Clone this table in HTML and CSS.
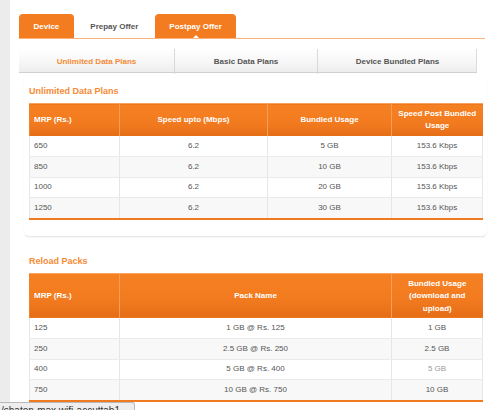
FILE: index.html
```html
<!DOCTYPE html>
<html>
<head>
<meta charset="utf-8">
<link rel="stylesheet" href="styles.css">
</head>
<body>
<div class="page">
  <div class="tabs">
    <div class="tab tab-on">Device</div>
    <div class="tab">Prepay Offer</div>
    <div class="tab tab-on tab-current">Postpay Offer</div>
  </div>
  <div class="subtabs">
    <div class="sub sub-active">Unlimited Data Plans</div>
    <div class="sub">Basic Data Plans</div>
    <div class="sub">Device Bundled Plans</div>
  </div>

  <div class="card">
    <h3 class="title">Unlimited Data Plans</h3>
    <table class="plans">
      <colgroup><col class="w-mrp"><col class="w-speed"><col class="w-usage"><col class="w-post"></colgroup>
      <thead>
        <tr><th class="left">MRP (Rs.)</th><th>Speed upto (Mbps)</th><th>Bundled Usage</th><th>Speed Post Bundled Usage</th></tr>
      </thead>
      <tbody>
        <tr><td class="left">650</td><td>6.2</td><td>5 GB</td><td>153.6 Kbps</td></tr>
        <tr><td class="left">850</td><td>6.2</td><td>10 GB</td><td>153.6 Kbps</td></tr>
        <tr><td class="left">1000</td><td>6.2</td><td>20 GB</td><td>153.6 Kbps</td></tr>
        <tr><td class="left">1250</td><td>6.2</td><td>30 GB</td><td>153.6 Kbps</td></tr>
      </tbody>
    </table>
  </div>

  <div class="card card-second">
    <h3 class="title">Reload Packs</h3>
    <table class="plans">
      <colgroup><col class="w-mrp"><col class="w-pack"><col class="w-post"></colgroup>
      <thead>
        <tr><th class="left">MRP (Rs.)</th><th>Pack Name</th><th>Bundled Usage (download and upload)</th></tr>
      </thead>
      <tbody>
        <tr><td class="left">125</td><td>1 GB @ Rs. 125</td><td>1 GB</td></tr>
        <tr><td class="left">250</td><td>2.5 GB @ Rs. 250</td><td>2.5 GB</td></tr>
        <tr><td class="left">400</td><td>5 GB @ Rs. 400</td><td class="faint">5 GB</td></tr>
        <tr><td class="left">750</td><td>10 GB @ Rs. 750</td><td>10 GB</td></tr>
      </tbody>
    </table>
  </div>
</div>
<div class="status">/shaton-max.wifi-accuttab1</div>
</body>
</html>
```

FILE: styles.css
```css
* { box-sizing: border-box; }

html, body {
  margin: 0;
  padding: 0;
  height: 100%;
  overflow: hidden;
}

body {
  background: #ececec;
  font-family: "Liberation Sans", Arial, sans-serif;
  font-size: 8px;
  color: #555;
}

.page {
  margin-left: 10px;
  background: #fff;
  min-height: 100%;
  padding: 14px 0 0 9px;
}

.tabs {
  display: flex;
  gap: 2px;
  width: 466px;
  border-bottom: 1px solid #fcb27a;
}

.tab {
  position: relative;
  height: 24px;
  line-height: 26px;
  padding: 0 14.5px;
  font-weight: bold;
  color: #555;
  border-radius: 4px 4px 0 0;
}

.tab-on {
  background: #f47c20;
  color: #fff;
}

.tab-current::after {
  content: "";
  position: absolute;
  left: 50%;
  bottom: 0;
  margin-left: -3px;
  border: 3px solid transparent;
  border-bottom-color: #fff;
  border-top-width: 0;
}

.subtabs {
  display: grid;
  grid-template-columns: 155px 143px 160px;
  width: 458px;
  margin-top: 10px;
  height: 24px;
  border-bottom: 1px solid #cfcfcf;
  border-right: 1px solid #dcdcdc;
  background: linear-gradient(#ffffff, #f6f6f6 60%, #ededed);
}

.sub {
  text-align: center;
  line-height: 25px;
  font-weight: bold;
  color: #555;
}

.sub + .sub {
  border-left: 1px solid #d8d8d8;
}

.sub-active {
  color: #f58a36;
}

.card {
  width: 463px;
  margin: 3px 0 0 5px;
  padding: 9px 5px 16px;
  border-radius: 0 0 5px 5px;
  box-shadow: 0 2px 2px -1px rgba(0, 0, 0, 0.13), 1px 0 1px -1px rgba(0,0,0,0.06), -1px 0 1px -1px rgba(0,0,0,0.06);
}

.card-second {
  margin-top: 10px;
  box-shadow: none;
}

.title {
  margin: 0 0 6px;
  font-size: 9px;
  line-height: 12px;
  font-weight: bold;
  color: #f58a36;
}

.plans {
  width: 453px;
  table-layout: fixed;
  border-collapse: collapse;
  border-bottom: 2px solid #f07a22;
}

.w-mrp { width: 90px; }
.w-speed { width: 148px; }
.w-usage { width: 124px; }
.w-post { width: 91px; }
.w-pack { width: 272px; }

.plans th {
  padding: 4px 4px 3.5px;
  line-height: 12.4px;
  font-weight: bold;
  color: #fff;
  text-align: center;
  background: linear-gradient(#f58123, #f37b1f 55%, #e56d17);
  border-top: 1px solid #f8a460;
  border-left: 1px solid #f79d55;
}

.plans th:first-child {
  border-left: 1px solid #f58123;
}

.plans td {
  padding: 3.8px 4px;
  line-height: 12px;
  text-align: center;
  color: #555;
  border-left: 1px solid #e6e6e6;
  border-right: 1px solid #e6e6e6;
  border-bottom: 1px solid #ebebeb;
}

.plans tbody tr:nth-child(even) td {
  background: #f8f8f8;
}

.plans tbody tr:last-child td {
  border-bottom: none;
}

.plans .left {
  text-align: left;
}

.plans td.faint {
  color: #999;
}

.status {
  position: fixed;
  left: 0;
  bottom: -9px;
  width: 135px;
  height: 17px;
  padding: 2px 0 0 1px;
  background: #eeeeee;
  border: 1px solid #b9b9b9;
  border-left: none;
  border-radius: 0 3px 0 0;
  font-size: 10px;
  line-height: 12px;
  color: #333;
  white-space: nowrap;
  overflow: hidden;
}
```
